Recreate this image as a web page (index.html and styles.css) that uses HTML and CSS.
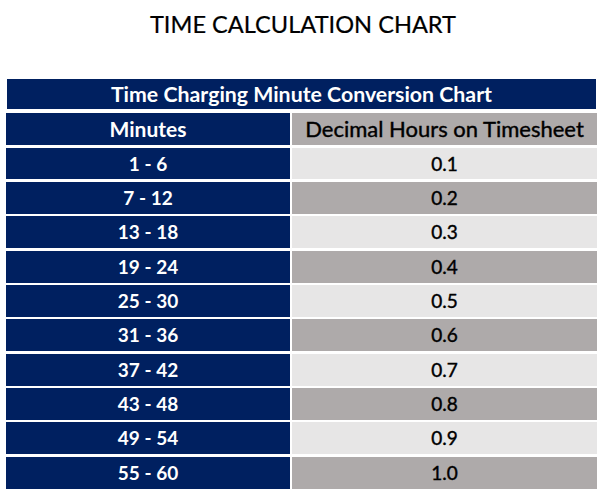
FILE: index.html
```html
<!DOCTYPE html>
<html lang="en">
<head>
<meta charset="utf-8">
<title>Time Calculation Chart</title>
<link rel="stylesheet" href="styles.css">
</head>
<body>
<h1 class="page-title">TIME CALCULATION CHART</h1>
<div class="chart">
  <div class="chart-caption">Time Charging Minute Conversion Chart</div>
  <div class="cell cell-min head-min">Minutes</div>
  <div class="cell cell-dec cell-dark head-dec">Decimal Hours on Timesheet</div>

  <div class="cell cell-min">1 - 6</div><div class="cell cell-dec cell-light">0.1</div>
  <div class="cell cell-min">7 - 12</div><div class="cell cell-dec cell-dark">0.2</div>
  <div class="cell cell-min">13 - 18</div><div class="cell cell-dec cell-light">0.3</div>
  <div class="cell cell-min">19 - 24</div><div class="cell cell-dec cell-dark">0.4</div>
  <div class="cell cell-min">25 - 30</div><div class="cell cell-dec cell-light">0.5</div>
  <div class="cell cell-min">31 - 36</div><div class="cell cell-dec cell-dark">0.6</div>
  <div class="cell cell-min">37 - 42</div><div class="cell cell-dec cell-light">0.7</div>
  <div class="cell cell-min">43 - 48</div><div class="cell cell-dec cell-dark">0.8</div>
  <div class="cell cell-min">49 - 54</div><div class="cell cell-dec cell-light">0.9</div>
  <div class="cell cell-min">55 - 60</div><div class="cell cell-dec cell-dark">1.0</div>
</div>
</body>
</html>
```
FILE: styles.css
```css
html, body {
  margin: 0;
  padding: 0;
  background: #ffffff;
}

body {
  font-family: Lato, "Open Sans", sans-serif;
  color: #000000;
}

.page-title {
  margin: 0;
  padding-top: 10px;
  font-size: 23.6px;
  font-weight: 400;
  line-height: 28px;
  text-align: center;
  -webkit-text-stroke: 0.2px #000000;
}

.chart {
  margin: 41px 0 0 6px;
  width: 591px;
  display: grid;
  grid-template-columns: 284px 305px;
  grid-auto-rows: 31.8px;
  column-gap: 2px;
  row-gap: 2.56px;
}

.chart-caption {
  grid-column: 1 / span 2;
  margin: 0 1px 1.1px;
  height: 30px;
  align-self: start;
  background: #002060;
  color: #ffffff;
  font-size: 21.3px;
  font-weight: 700;
  line-height: 30px;
  text-align: center;
}

.cell {
  text-align: center;
  line-height: 31.8px;
  font-size: 19px;
}

.cell-min {
  background: #002060;
  color: #ffffff;
  font-weight: 700;
}

.cell-dec {
  color: #000000;
  font-weight: 400;
  -webkit-text-stroke: 0.4px #000000;
}

.cell-light {
  background: #e7e6e6;
}

.cell-dark {
  background: #aeaaaa;
}

.head-min {
  font-size: 21px;
}

.head-dec {
  font-size: 22px;
}
```
